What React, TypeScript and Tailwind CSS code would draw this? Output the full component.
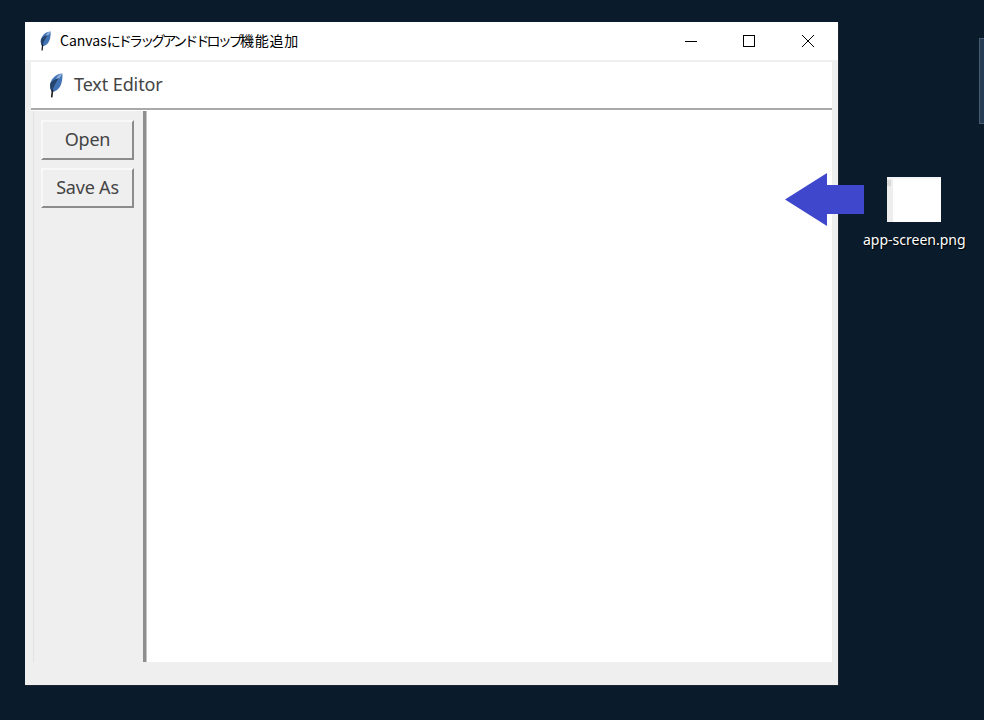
function Feather({ className }: { className: string }) {
  return (
    <svg viewBox="0 0 13 25" className={className}>
      <path d="M12.8 0.5 C7.5 0.5 2 5 0.8 10.5 C0.2 14 1 17 2.6 19 C7 18.5 10.5 15 11.8 10.5 C12.8 7 13.2 3.5 12.8 0.5 Z" fill="#4172b4" />
      <path d="M12.8 0.5 C9 1.5 7 4 6 7.5 C9 6.5 11.5 4 12.8 0.5 Z" fill="#8fb2dc" />
      <path d="M0.8 10.5 C0.2 14 1 17 2.6 19 C4 14 6 9.5 9.5 5 C5.5 6 2.2 8 0.8 10.5 Z" fill="#26436b" />
      <path d="M3 17 L2.2 24.4" stroke="#1a1a1a" strokeWidth="1.6" fill="none" />
    </svg>
  );
}

function TkButton({ label }: { label: string }) {
  return (
    <div className="w-[93px] h-[40px] pb-[2px] flex items-center justify-center bg-[#efefef] border-t-2 border-l-2 border-t-[#f8f8f8] border-l-[#f8f8f8] border-r-2 border-b-2 border-r-[#8c8c8c] border-b-[#8c8c8c] text-[18px] text-[#444] tracking-[-0.2px]">
      {label}
    </div>
  );
}

export default function App() {
  return (
    <div
      className="relative w-[984px] h-[720px] overflow-hidden bg-[#0a1b2b] pt-[22px] pl-[25px]"
      style={{ fontFamily: '"Noto Sans", "Noto Sans CJK JP", sans-serif' }}
    >
      <div className="w-[813px] h-[663px] bg-[#efefef] flex flex-col shadow-[1px_1px_0_#1d2630]">
        <div className="h-[38px] bg-white flex items-center shrink-0">
          <Feather className="w-[11px] h-[20px] ml-[15px]" />
          <span
            className="ml-[9px] pb-[1px] text-[14px] text-black whitespace-nowrap"
            style={{ fontFamily: '"Noto Sans CJK JP", sans-serif' }}
          >
            Canvas
            <span className="tracking-[-2.85px]">にドラッグアンドドロップ</span>
            <span className="tracking-[0.7px]">機能追加</span>
          </span>
          <div className="ml-auto flex h-full items-center">
            <div className="w-[59px] flex justify-center">
              <div className="w-[12px] h-px bg-black" />
            </div>
            <div className="w-[58px] flex justify-center">
              <div className="w-[12px] h-[12px] border border-black" />
            </div>
            <div className="w-[60px] flex justify-center">
              <svg width="14" height="14" viewBox="0 0 14 14">
                <path d="M1 1 L13 13 M13 1 L1 13" stroke="#000" strokeWidth="1" fill="none" />
              </svg>
            </div>
          </div>
        </div>
        <div className="flex-1 flex flex-col px-[6px] pt-[2px] pb-[23px] min-h-0">
          <div className="h-[46px] bg-white flex items-center shrink-0">
            <Feather className="w-[14px] h-[25px] ml-[18px]" />
            <span className="ml-[11px] pb-[2px] text-[18px] text-[#444] tracking-[-0.1px]">Text Editor</span>
          </div>
          <div className="h-[3px] bg-white border-t-2 border-[#a9a9a9] shrink-0" />
          <div className="flex-1 flex min-h-0">
            <div className="w-[110px] ml-[2px] border-l border-l-[#e2e2e2] bg-[#efefef] flex flex-col gap-[8px] pl-[7px] pt-[9px] shrink-0">
              <TkButton label="Open" />
              <TkButton label="Save As" />
            </div>
            <div className="w-[4px] bg-[#8e8e8e] border-r border-r-[#c4c4c4] shrink-0" />
            <div className="flex-1 bg-white" />
          </div>
        </div>
      </div>

      <div className="absolute right-0 top-[38px] w-[5px] h-[86px] bg-[#263d55] border-l border-y border-[#4a5c70]" />

      <svg className="absolute left-[785px] top-[173px]" width="80" height="53" viewBox="0 0 80 53">
        <path d="M0 26.5 L42 0 L42 12 L79 12 L79 41 L42 41 L42 53 Z" fill="#3f48cc" />
      </svg>

      <div className="absolute left-[887px] top-[177px] w-[54px] h-[45px] bg-white flex flex-col">
        <div className="h-[2px] bg-[#f6f6f6] shrink-0" />
        <div className="flex-1 flex">
          <div className="w-[6px] h-full bg-[#eeeeee]">
            <div className="w-[4px] h-[6px] mt-[1px] bg-[#d9d9d9]" />
          </div>
        </div>
      </div>
      <div
        className="absolute left-[863px] top-[231px] text-[14px] leading-[18px] text-white whitespace-nowrap [text-shadow:1px_1px_1px_#000]"
        style={{ fontFamily: '"Noto Sans", sans-serif' }}
      >
        app-screen.png
      </div>
    </div>
  );
}
